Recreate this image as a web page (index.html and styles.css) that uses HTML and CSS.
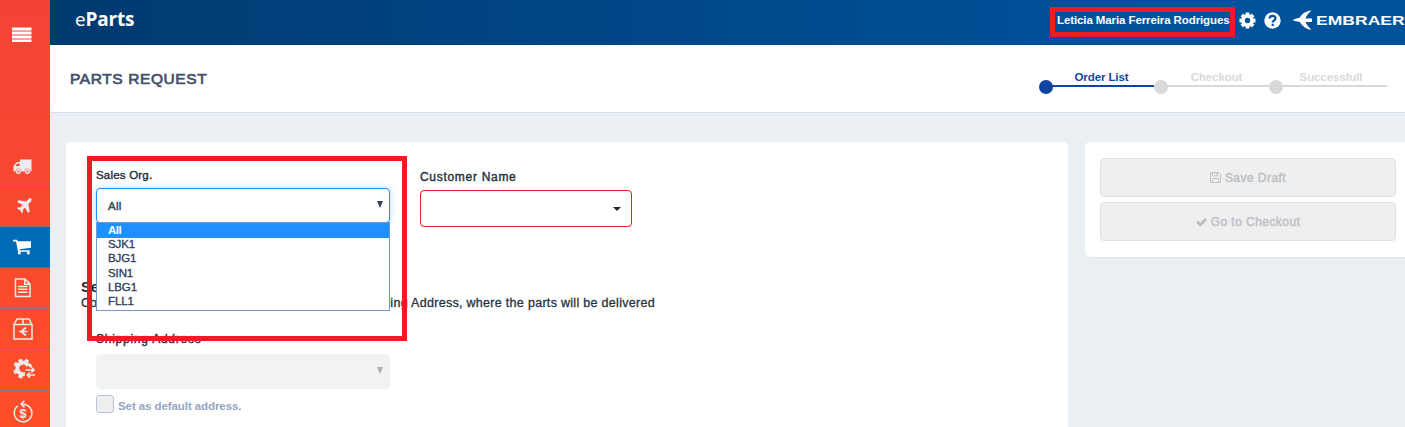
FILE: index.html
```html
<!DOCTYPE html>
<html lang="en">
<head>
<meta charset="utf-8">
<title>eParts</title>
<link rel="stylesheet" href="styles.css">
</head>
<body>
<div class="app">
  <nav class="sidebar">
    <a class="menu"><svg width="20" height="15" viewBox="0 0 20 15"><path fill="#fff" d="M0 .5h19.500v3H0zM0 4.500h19.500v3H0zM0 8.500h19.500v3H0zM0 12.400h19.500v2.600H0z"/></svg></a>
    <a class="item"><svg width="20" height="16" viewBox="0 0 20 16"><path fill="#ececf2" fill-rule="evenodd" d="M7 .5h11.500v12H.5V7L4 3h3zM3 7h3.600V4.500H4.600L3 6.300z"/><g fill="#ececf2" stroke="#fb4a30" stroke-width=".5"><circle cx="5.400" cy="12.500" r="2.800"/><circle cx="14.400" cy="12.500" r="2.800"/></g><g fill="#fb4a30"><circle cx="5.400" cy="12.500" r="1"/><circle cx="14.400" cy="12.500" r="1"/></g></svg></a>
    <a class="item"><svg width="18" height="16" viewBox="0 0 18 16"><path fill="#ececf2" d="M16.200.7c.7.8.3 2.300-.7 3.300L13.300 6.200l1.400 7.300-1.600 1.400-3.100-5.400-2.300 2.200.3 2.300-1.200 1-1.600-2.800L2 10.500l1-1.200 2.300.3 2.300-2.600-5.500-3L3.700 2.300l7.300 1.300L13.300 1.500c1-1 2.200-1.500 2.900-.8z"/></svg></a>
    <a class="item active"><svg width="20" height="16" viewBox="0 0 20 16"><path fill="#fff" d="M0 .8h4l.7 1.400H18v6.500L6.500 10.200l.2 1h10v1.600H5L3 2.400H0z"/><circle cx="6.300" cy="14" r="1.500" fill="#fff"/><circle cx="15.300" cy="14" r="1.500" fill="#fff"/></svg></a>
    <a class="item"><svg width="18" height="20" viewBox="0 0 18 20"><path fill="none" stroke="#ececec" stroke-width="1.500" d="M1.500 1H11l5 5v12.500H1.500zM10.700 1v5.300H16M4 8.500h9.500M4 11.300h9.500M4 14.200h9.500"/></svg></a>
    <a class="item"><svg width="20" height="22" viewBox="0 0 20 22"><path fill="none" stroke="#ececec" stroke-width="1.500" d="M1 6.500h18V21H1zM1 6.500L4 1h12l3 5.500M10 1v5.500"/><path fill="none" stroke="#ececec" stroke-width="1.700" d="M13 9.500L8 13.500l5 4M6 13.500h8.500"/></svg></a>
    <a class="item"><svg width="24" height="20" viewBox="0 0 24 20"><path fill="none" stroke="#ececec" stroke-width="4" d="M15.200 7A5.700 5.700 0 1 0 12.500 14.600"/><path stroke="#ececec" stroke-width="4" d="M8 3L7 .4M12.800 3l2-2.200M4.500 6L1.500 4.500M4 12l-3 1.500M8 16l-1 3M16 7l2.500-1"/><path fill="none" stroke="#fd4c2b" stroke-width="4.500" d="M11.800 11.500h10M11.800 16.500h10"/><path fill="none" stroke="#ececec" stroke-width="1.500" d="M12.500 10.900h8.500M18.300 8.300l2.800 2.600-2.800 2.600M22 16h-8M17 13.500l-2.800 2.500 2.800 2.600"/></svg></a>
    <a class="item"><svg width="20" height="23" viewBox="0 0 20 23"><path fill="none" stroke="#ececec" stroke-width="1.500" d="M9.500 4.200A8.800 8.800 0 1 1 5 5.800M11.500.8L8 4.100l3.500 3.300"/><text x="10" y="17.500" class="dollar">$</text></svg></a>
  </nav>
  <div class="main">
    <header class="topbar">
      <div class="brand">e<b>Parts</b></div>
      <div class="tools">
        <span class="user">Leticia Maria Ferreira Rodrigues</span>
        <svg class="gear" width="17" height="17" viewBox="0 0 17 17"><path stroke="#fff" stroke-width="3.800" d="M8.500.5v16M.5 8.500h16M2.900 2.900l11.200 11.200M14.100 2.900L2.900 14.100"/><circle cx="8.500" cy="8.500" r="4.400" fill="none" stroke="#fff" stroke-width="3.600"/><circle cx="8.500" cy="8.500" r="2.700" fill="#00529b"/></svg>
        <svg class="help" width="17" height="17" viewBox="0 0 17 17"><circle cx="8.500" cy="8.500" r="8.200" fill="#fff"/><path fill="none" stroke="#00529b" stroke-width="2.200" d="M5.600 6.500c.2-3.600 6.200-3.400 5.800.1-.2 1.700-2.700 1.800-2.700 4M8.700 11.800V14"/></svg>
        <svg class="bird" width="20" height="20" viewBox="0 0 20 20"><path fill="#fff" d="M18.500.4C12 1 9 4 6.500 7.800 3 8.300 1 9.200 0 10.300c1.500 1 3.500 1.300 6.300 1.400 3 3.600 6 7.500 12 8-2.500-2.500-4.800-4.600-5.800-7.600h6.500V8.600h-6.600C13.200 5.500 15.500 3 18.500.4z"/></svg>
        <span class="company">EMBRAER</span>
      </div>
    </header>
    <section class="titlebar">
      <h1>PARTS REQUEST</h1>
      <ol class="steps">
        <li class="on"><span>Order List</span></li>
        <li><span>Checkout</span></li>
        <li><span>Successfull</span></li>
      </ol>
    </section>
    <div class="content">
      <section class="card form">
        <div class="fields">
          <div class="field">
            <label class="l-sales">Sales Org.</label>
            <div class="select focus"><span>All</span><i class="tri"></i></div>
            <ul class="options">
              <li class="sel">All</li><li>SJK1</li><li>BJG1</li><li>SIN1</li><li>LBG1</li><li>FLL1</li>
            </ul>
          </div>
          <div class="field customer">
            <label class="l-cust">Customer Name</label>
            <div class="combo"><i class="caret"></i></div>
          </div>
        </div>
        <h2>Select Shipping Address</h2>
        <p class="desc"><span>Confirm or choose the</span><span class="tail">Shipping Address, where the parts will be delivered</span></p>
        <div class="shipping">
          <label class="l-ship">Shipping Address</label>
          <div class="select disabled"><i class="tri"></i></div>
          <div class="check"><i class="box"></i><span>Set as default address.</span></div>
        </div>
      </section>
      <aside class="card actions">
        <button disabled><svg width="11" height="11" viewBox="0 0 11 11"><path fill="none" stroke="#bfc3c7" d="M.5.5h8l2 2v8H.5zM2.500.5v3.500h5V.5M2.500 10.500V6.500h6v4M6 1v2.500"/></svg><span>Save Draft</span></button>
        <button disabled><svg width="11" height="10" viewBox="0 0 11 10"><path fill="none" stroke="#b9bdc0" stroke-width="2.600" d="M1 4.500L4.300 7.800 10 2"/></svg><span>Go to Checkout</span></button>
      </aside>
    </div>
  </div>
  <div class="mark mark-user"></div>
  <div class="mark mark-sales"></div>
</div>
</body>
</html>
```
FILE: styles.css
```css
* { box-sizing: border-box; }
body { margin: 0; font-family: "Liberation Sans", Arial, sans-serif; background: #eaeff4; overflow: hidden; }
ul, ol { list-style: none; margin: 0; padding: 0; }
svg { display: block; flex: none; }
.app { position: relative; display: flex; width: 1405px; height: 427px; overflow: hidden; }

.sidebar { width: 50px; flex: none; height: 432px; background: linear-gradient(#f44236, #ff4f28); display: flex; flex-direction: column; }
.menu { height: 145px; padding: 27px 0 0 12px; flex: none; }
.item { height: 41px; flex: none; border-bottom: 1px solid #857772; display: flex; align-items: center; padding-left: 13px; }
.item:nth-child(2) svg { margin-top: 3px; }
.item:nth-child(3) svg { margin-left: 2px; }
.item:nth-child(5) svg { margin-left: 1px; }
.item:nth-child(7) svg { margin-top: -2px; }
.item.active { background: #006bb6; border-bottom-color: #5a7285; }
.dollar { font-size: 12.500px; font-weight: bold; fill: #ececec; text-anchor: middle; }

.main { flex: 1; min-width: 0; display: flex; flex-direction: column; }
.topbar { height: 45px; flex: none; background: linear-gradient(90deg, #003a70, #00529b 80%); color: #fff; display: flex; justify-content: space-between; }
.brand { font: 19px/24px "Open Sans", "Noto Sans", sans-serif; padding: 7px 0 0 25px; letter-spacing: -.2px; }
.tools { display: flex; align-items: center; height: 40px; width: 348px; flex: none; }
.user { font-size: 11.500px; font-weight: bold; letter-spacing: -.1px; width: 182px; white-space: nowrap; }
.help { margin-left: 8px; }
.bird { margin: 0 3px 0 12px; width: 20px; }
.company { font-size: 13px; font-weight: bold; white-space: nowrap; transform: scaleX(1.350); transform-origin: 0 50%; }

.titlebar { height: 68px; flex: none; background: #fff; border-bottom: 1px solid #d2e0e8; display: flex; justify-content: space-between; padding: 0 18px 0 20px; }
h1 { margin: 24px 0 0; font-size: 15.500px; line-height: 20px; font-weight: normal; color: #44506c; -webkit-text-stroke: .7px #44506c; letter-spacing: .6px; }
.steps { display: flex; padding-top: 25px; }
.steps li { width: 115px; height: 24px; color: #d9d9d9; font-size: 11.500px; font-weight: bold; letter-spacing: -.1px; line-height: 14px; text-align: center; position: relative; padding-left: 10px; }
.steps li:last-child { width: 118px; padding-left: 6px; }
.steps li::before { content: ""; position: absolute; left: 7px; right: 0; top: 15px; height: 2px; background: #d9d9d9; }
.steps li::after { content: ""; position: absolute; left: 0; top: 10px; width: 14px; height: 14px; border-radius: 50%; background: #d9d9d9; }
.steps li.on { color: #1446a0; }
.steps li.on::before, .steps li.on::after { background: #0f45a1; }

.content { display: flex; gap: 17px; padding: 30px 0 0 16px; }
.card { background: #fff; border-radius: 5px; box-shadow: 0 1px 1px #dde4e9; flex: none; margin-top: -1px; }
.form { width: 1002px; height: 320px; padding: 26px 0 0 15px; }
.fields { display: flex; gap: 30px; padding-left: 15px; height: 111px; }
.field { width: 294px; position: relative; color: #263140; }
label { display: block; font-size: 11.500px; line-height: 14px; color: #263140; -webkit-text-stroke: .4px #263140; white-space: nowrap; letter-spacing: .2px; }
.select { margin-top: 6px; height: 35px; width: 294px; border: 1px solid #1e90ff; border-radius: 4px; display: flex; align-items: center; justify-content: space-between; padding: 0 6px 0 11px; font-size: 11.500px; letter-spacing: .3px; color: #3c4860; -webkit-text-stroke: .5px #3c4860; background: #fff; }
.select.focus { box-shadow: 0 0 6px rgba(30,144,255,.35); }
.tri { border: 3.500px solid transparent; border-top: 7px solid #33435c; border-bottom: 0; margin: -3px 0 0 auto; }
.options { position: absolute; left: 0; top: 54px; width: 294px; height: 89px; border: 1px solid #7498cd; background: #fff; font-size: 11.500px; line-height: 13px; color: #32405a; -webkit-text-stroke: .35px #32405a; letter-spacing: -.1px; }
.options li { padding-left: 11px; height: 14.250px; }
.options .sel { background: #1e90ff; color: #fff; font-weight: bold; -webkit-text-stroke: 0; height: 15px; line-height: 14px; letter-spacing: -.5px; }
.customer { width: 212px; padding-top: 2px; }
.combo { margin-top: 6px; height: 37px; border: 1px solid #e5251d; border-radius: 4px; display: flex; align-items: center; padding-right: 10px; box-shadow: inset 0 0 1px #aab; }
.caret { border: 4px solid transparent; border-top-color: #1d2835; border-bottom: 0; margin-left: auto; }
.l-cust { letter-spacing: .7px; font-size: 12px; }
h2 { margin: 0; font-size: 14.500px; line-height: 16px; color: #1b2633; }
.desc { margin: 0; font-size: 12.500px; line-height: 16px; color: #263140; width: 574px; display: flex; justify-content: space-between; white-space: nowrap; -webkit-text-stroke: .3px #263140; }
.tail { letter-spacing: .3px; }
.shipping { padding: 21px 0 0 15px; }
.l-ship { font-size: 12px; letter-spacing: .75px; }
.select.disabled { background: #f2f2f2; border-color: #f2f2f2; margin-top: 8px; }
.disabled .tri { border-top-color: #a9adb1; }
.check { display: flex; align-items: center; gap: 4px; margin-top: 6px; font-size: 11.500px; font-weight: bold; letter-spacing: -.08px; color: #93a5c2; }
.box { width: 18px; height: 18px; border: 1px solid #b6c3d6; border-radius: 3px; background: #eee; }
.check span { margin-top: 4px; }
.actions { width: 340px; height: 115px; padding: 16px 0 0 15px; display: flex; flex-direction: column; gap: 5px; }
.actions button { width: 296px; height: 39px; padding: 0; border: 1px solid #e2e2e2; border-radius: 4px; background: #efefef; color: #bfc3c7; font: 12px "Liberation Sans", sans-serif; -webkit-text-stroke: .55px #bfc3c7; letter-spacing: .45px; display: flex; align-items: center; justify-content: center; gap: 4px; flex: none; }

.mark { position: absolute; border: 5px solid #ed1c24; }
.mark-user { left: 1050px; top: 7px; width: 185px; height: 30px; }
.mark-sales { left: 87px; top: 156px; width: 320px; height: 185px; }
```
